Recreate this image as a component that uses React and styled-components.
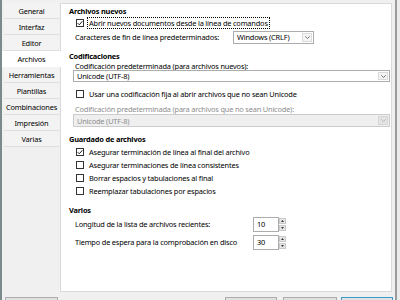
import React from 'react';
import styled, { createGlobalStyle } from 'styled-components';

const GlobalStyle = createGlobalStyle`
  html, body { margin: 0; padding: 0; }
  body {
    width: 400px;
    height: 300px;
    overflow: hidden;
    background: #f0f0f0;
    font-family: "Noto Sans", "Open Sans", sans-serif;
  }
`;

const Window = styled.div`
  width: 400px;
  height: 300px;
  box-sizing: border-box;
  border-left: 2px solid #7b8a8a;
  background: #f0f0f0;
  box-shadow: inset -3px 0 0 #ececec, inset -5px 0 0 #9c9c9c;
  font-size: 7.4px;
  letter-spacing: -0.18px;
  color: #000;
  overflow: hidden;
  white-space: nowrap;
`;

const Body = styled.div`
  display: flex;
  padding: 3px 8px 0 0;
  height: 289px;
`;

const Sidebar = styled.div`
  width: 58px;
  display: flex;
  flex-direction: column;
`;

const NavItem = styled.div`
  height: 16px;
  box-sizing: border-box;
  display: flex;
  align-items: center;
  justify-content: center;
  border-bottom: 1px solid ${p => (p.$active ? '#fff' : '#dedede')};
  margin-left: ${p => (p.$active ? '0' : '2px')};
  margin-right: ${p => (p.$active ? '-1px' : '1px')};
  background: ${p => (p.$active ? '#fff' : '#f3f3f3')};
  position: relative;
  z-index: ${p => (p.$active ? 1 : 0)};
`;

const Panel = styled.div`
  flex: 1;
  background: #fff;
  border: 1px solid #dadada;
  padding: 1px 1px 0 8px;
  display: flex;
  flex-direction: column;
`;

const Heading = styled.div`
  height: 12px;
  line-height: 12px;
  font-weight: bold;
  margin-top: ${p => p.$mt || 0}px;
`;

const CheckRow = styled.div`
  height: ${p => p.$h || 12}px;
  margin-top: ${p => p.$mt || 0}px;
  padding-left: 7px;
  display: flex;
  align-items: center;
  gap: 3px;
`;

const Box = styled.span`
  width: 8px;
  height: 8px;
  box-sizing: border-box;
  border: 1px solid #333;
  background: #fff;
  display: flex;
  align-items: center;
  justify-content: center;
`;

const CheckText = styled.span`
  line-height: 10px;
  padding: 0 1px;
  border: 1px dotted ${p => (p.$focus ? '#000' : 'transparent')};
`;

const FieldRow = styled.div`
  height: ${p => p.$h || 14}px;
  margin-top: ${p => p.$mt || 0}px;
  padding-left: 6px;
  display: flex;
  align-items: center;
`;

const FieldLabel = styled.span`
  width: ${p => p.$w}px;
  flex: none;
  color: ${p => (p.$disabled ? '#8d8d8d' : '#000')};
`;

const Label = styled.div`
  height: ${p => p.$h || 9}px;
  line-height: ${p => p.$h || 9}px;
  margin-top: ${p => p.$mt || 0}px;
  padding-left: 6px;
  color: ${p => (p.$disabled ? '#8d8d8d' : '#000')};
`;

const Select = styled.div`
  height: ${p => p.$h || 12}px;
  width: ${p => (p.$w ? `${p.$w}px` : 'auto')};
  margin-left: ${p => p.$ml || 0}px;
  box-sizing: border-box;
  border: 1px solid ${p => (p.$disabled ? '#cccccc' : '#acacac')};
  background: ${p => (p.$disabled ? '#efefef' : '#fff')};
  color: ${p => (p.$disabled ? '#8d8d8d' : '#000')};
  display: flex;
  align-items: center;
  padding-left: 3px;
`;

const SelectText = styled.span`
  flex: 1;
`;

const DropButton = styled.span`
  width: 10px;
  align-self: stretch;
  margin: 1px;
  box-sizing: border-box;
  border: 1px solid ${p => (p.$disabled ? '#d6d6d6' : '#dcdcdc')};
  background: ${p => (p.$disabled ? '#e4e4e4' : '#f4f4f4')};
  display: flex;
  align-items: center;
  justify-content: center;
`;

const SpinBox = styled.div`
  display: flex;
  align-items: stretch;
  height: 15px;
`;

const SpinInput = styled.div`
  width: 26px;
  box-sizing: border-box;
  border: 1px solid #acacac;
  display: flex;
  align-items: center;
  padding-left: 3px;
`;

const SpinButtons = styled.div`
  width: 7px;
  display: flex;
  flex-direction: column;
  gap: 1px;
  padding: 1px 0;
`;

const SpinButton = styled.span`
  flex: 1;
  background: #e6e6e6;
  border: 1px solid #c9c9c9;
  display: flex;
  align-items: center;
  justify-content: center;
`;

const Footer = styled.div`
  display: flex;
  padding: 5px 7px 0 3px;
  gap: 4px;
`;

const Button = styled.div`
  width: ${p => p.$w}px;
  height: 20px;
  box-sizing: border-box;
  background: #e1e1e1;
  border: 1px solid ${p => (p.$default ? '#3d9bd0' : '#adadad')};
  margin-left: ${p => p.$ml || 0}px;
`;

const Check = () => (
  <svg width="6" height="6" viewBox="0 0 6 6">
    <path d="M0.6 3.1 L2.3 4.8 L5.4 1.2" fill="none" stroke="#222" strokeWidth="1" />
  </svg>
);

const Chevron = ({ color = '#555' }) => (
  <svg width="5" height="3" viewBox="0 0 5 3">
    <path d="M0.3 0.3 L2.5 2.5 L4.7 0.3" fill="none" stroke={color} strokeWidth="0.8" />
  </svg>
);

const Tri = ({ up }) => (
  <svg width="3" height="2" viewBox="0 0 3 2">
    <path d={up ? 'M0 2 L1.5 0 L3 2 Z' : 'M0 0 L1.5 2 L3 0 Z'} fill="#333" />
  </svg>
);

const Checkbox = ({ checked, focus, children, h, mt }) => (
  <CheckRow $h={h} $mt={mt}>
    <Box>{checked && <Check />}</Box>
    <CheckText $focus={focus}>{children}</CheckText>
  </CheckRow>
);

const Spin = ({ value }) => (
  <SpinBox>
    <SpinInput>{value}</SpinInput>
    <SpinButtons>
      <SpinButton><Tri up /></SpinButton>
      <SpinButton><Tri /></SpinButton>
    </SpinButtons>
  </SpinBox>
);

const pages = ['General', 'Interfaz', 'Editor', 'Archivos', 'Herramientas', 'Plantillas', 'Combinaciones', 'Impresión', 'Varias'];

export default function App() {
  return (
    <>
      <GlobalStyle />
      <Window>
        <Body>
          <Sidebar>
            {pages.map(p => (
              <NavItem key={p} $active={p === 'Archivos'}>{p}</NavItem>
            ))}
          </Sidebar>
          <Panel>
            <Heading>Archivos nuevos</Heading>
            <Checkbox checked focus>Abrir nuevos documentos desde la línea de comandos</Checkbox>
            <FieldRow $mt={1}>
              <FieldLabel $w={158}>Caracteres de fin de línea predeterminados:</FieldLabel>
              <Select $w={81} $h={13}>
                <SelectText>Windows (CRLF)</SelectText>
                <DropButton><Chevron /></DropButton>
              </Select>
            </FieldRow>

            <Heading $mt={6}>Codificaciones</Heading>
            <Label $h={8}>Codificación predeterminada (para archivos nuevos):</Label>
            <Select $ml={4}>
              <SelectText>Unicode (UTF-8)</SelectText>
              <DropButton><Chevron /></DropButton>
            </Select>
            <Checkbox mt={6}>Usar una codificación fija al abrir archivos que no sean Unicode</Checkbox>
            <Label $mt={5} $disabled>Codificación predeterminada (para archivos que no sean Unicode):</Label>
            <Select $ml={4} $h={13} $disabled>
              <SelectText>Unicode (UTF-8)</SelectText>
              <DropButton $disabled><Chevron color="#aaa" /></DropButton>
            </Select>

            <Heading $mt={6}>Guardado de archivos</Heading>
            <Checkbox h={13} checked>Asegurar terminación de línea al final del archivo</Checkbox>
            <Checkbox h={13}>Asegurar terminaciones de línea consistentes</Checkbox>
            <Checkbox h={13}>Borrar espacios y tabulaciones al final</Checkbox>
            <Checkbox h={13}>Reemplazar tabulaciones por espacios</Checkbox>

            <Heading $mt={7}>Varios</Heading>
            <FieldRow $h={16}>
              <FieldLabel $w={178}>Longitud de la lista de archivos recientes:</FieldLabel>
              <Spin value="10" />
            </FieldRow>
            <FieldRow $h={16} $mt={2}>
              <FieldLabel $w={178}>Tiempo de espera para la comprobación en disco</FieldLabel>
              <Spin value="30" />
            </FieldRow>
          </Panel>
        </Body>
        <Footer>
          <Button $w={53} />
          <Button $w={52} $ml={163} />
          <Button $w={54} $ml={2} />
          <Button $w={52} $default />
        </Footer>
      </Window>
    </>
  );
}
